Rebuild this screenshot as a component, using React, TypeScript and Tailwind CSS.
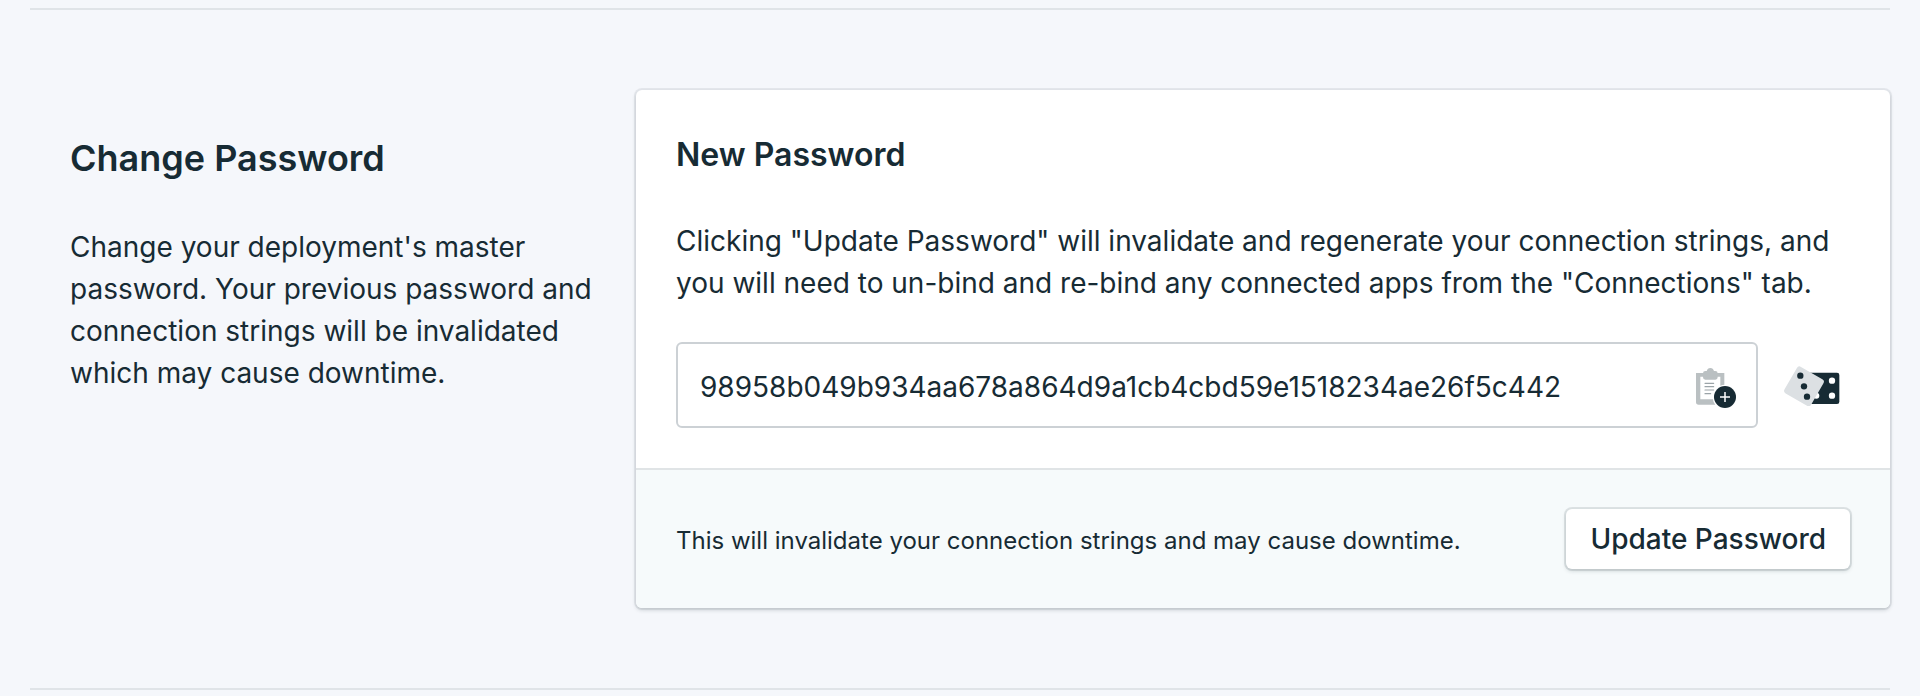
const ClipboardAdd = () => (
  <svg viewBox="0 0 120 120" className="h-10 w-10" aria-hidden="true">
    <path d="M0 15H22V26H13V94H58V110H8Q0 110 0 102Z" fill="#bac0c2" />
    <path d="M63 15H85V56H73V26H63Z" fill="#bac0c2" />
    <path d="M21 16Q21 9 28 9H32C34 3 37 0 43 0S52 3 54 9H58Q65 9 65 16V28Q65 35 58 35H28Q21 35 21 28Z" fill="#bac0c2" />
    <path d="M27 46H53M27 56H53M27 66H53M27 77H44" stroke="#9ba4a8" strokeWidth="3.5" strokeLinecap="round" />
    <circle cx="87" cy="87" r="37" fill="#fff" />
    <circle cx="87" cy="87" r="33" fill="#172b34" />
    <path d="M87 72V102M72 87H102" stroke="#fff" strokeWidth="4.5" />
  </svg>
);

const Dice = () => (
  <svg viewBox="0 0 168 120" className="h-10 w-14" aria-hidden="true">
    <rect x="72" y="20" width="94" height="94" rx="7" fill="#172b34" />
    <circle cx="97" cy="89" r="9" fill="#fff" />
    <circle cx="144" cy="44" r="9.5" fill="#fff" />
    <circle cx="144" cy="89" r="9.5" fill="#fff" />
    <rect x="14" y="15" width="92" height="92" rx="9" transform="rotate(30 60 61)" fill="#dce0e3" />
    <circle cx="49" cy="29" r="9.5" fill="#172b34" />
    <circle cx="60" cy="61" r="9.5" fill="#172b34" />
    <circle cx="69" cy="92" r="9.5" fill="#172b34" />
  </svg>
);

export default function App() {
  return (
    <main className="min-h-screen bg-[#f5f7fb] px-[30px] pt-2 pb-1.5 font-['Inter','Liberation_Sans',sans-serif] text-[28px] leading-[42px] text-[#172b34]">
      <section className="flex items-start border-y-2 border-[#e0e4e8] pt-20 pb-20">
        <div className="w-[606px] shrink-0 px-10 pt-11">
          <h2 className="text-[36px] leading-[48px] font-semibold">Change Password</h2>
          <p className="mt-11">
            Change your deployment's master password. Your previous password and connection strings will be invalidated which may cause downtime.
          </p>
        </div>
        <form
          className="min-w-0 flex-1 overflow-hidden rounded-md bg-white shadow-[0_0_0_2px_rgba(23,43,52,0.07),0_2px_4px_rgba(23,43,52,0.2)]"
          onSubmit={(e) => e.preventDefault()}
        >
          <div className="p-10">
            <h3 className="text-[32px] leading-[50px] font-semibold">New Password</h3>
            <p className="mt-10">
              Clicking "Update Password" will invalidate and regenerate your connection strings, and you will need to un-bind and re-bind any connected apps from the "Connections" tab.
            </p>
            <div className="mt-[38px] flex items-center gap-[26px]">
              <div className="flex h-[86px] min-w-0 flex-1 items-center rounded-md border-2 border-[#ccd1d5] bg-white pr-5 pl-[22px]">
                <input
                  type="text"
                  aria-label="New Password"
                  defaultValue="98958b049b934aa678a864d9a1cb4cbd59e1518234ae26f5c442"
                  className="min-w-0 flex-1 bg-transparent pt-1 outline-none"
                />
                <button type="button" aria-label="Copy password" className="shrink-0 pt-1.5">
                  <ClipboardAdd />
                </button>
              </div>
              <button type="button" aria-label="Generate password" className="mr-[10px] shrink-0 pt-0.5">
                <Dice />
              </button>
            </div>
          </div>
          <div className="flex items-center justify-between border-t-2 border-[#e0e4e6] bg-[#f6fafb] px-10 py-[39px]">
            <p className="pt-1 text-[24px] leading-9">This will invalidate your connection strings and may cause downtime.</p>
            <button type="submit" className="h-[60px] rounded-md bg-white px-6 font-medium shadow-[0_0_0_2px_rgba(23,43,52,0.11),0_2px_4px_rgba(23,43,52,0.18)]">
              Update Password
            </button>
          </div>
        </form>
      </section>
    </main>
  );
}
